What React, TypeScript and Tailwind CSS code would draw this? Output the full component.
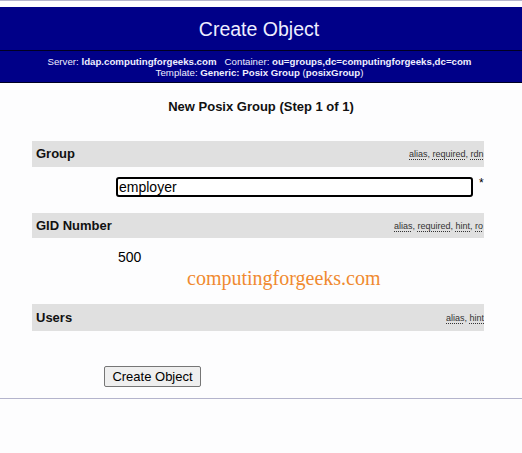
import React from "react";

type Attr = {
    label: string;
    hints: string[];
    hintWidth: string;
};

const sans = { fontFamily: '"Liberation Sans", Arial, sans-serif' };

function AttrBar({ label, hints, hintWidth }: Attr) {
    return (
        <div className="flex h-full items-center justify-between bg-[#e0e0e0] pl-1">
            <span className="text-[13px] leading-[16px] font-bold text-[#111]">{label}</span>
            <span className={`${hintWidth} overflow-hidden whitespace-nowrap text-[9px] leading-[12px] text-[#333]`}>
                {hints.map((h, i) => (
                    <React.Fragment key={h}>
                        <abbr className="no-underline">
                            <span className="underline decoration-dotted underline-offset-2">{h}</span>
                        </abbr>
                        {i < hints.length - 1 ? ", " : ""}
                    </React.Fragment>
                ))}
            </span>
        </div>
    );
}

export default function App() {
    return (
        <div className="relative h-[453px] w-[522px] overflow-hidden bg-[#fdfdfe]" style={sans}>
            {/* top rule */}
            <div className="h-[1px] bg-[#b4b4cc]" />

            {/* page header */}
            <div className="mt-[6px] bg-[#000088] text-center text-[#eeeeff]">
                <div className="flex h-[43px] items-center justify-center pr-[4px] text-[19.5px] leading-[24px]">Create Object</div>
                <div className="h-[1px] bg-[#000022]" />
                <div className="flex h-[31px] flex-col items-center justify-center pr-[3px] text-[9.7px] leading-[11px]">
                    <div>
                        Server: <b>ldap.computingforgeeks.com</b>&nbsp;&nbsp;&nbsp;Container:{" "}
                        <b>ou=groups,dc=computingforgeeks,dc=com</b>
                    </div>
                    <div>
                        Template: <b>Generic: Posix Group</b> (<b>posixGroup</b>)
                    </div>
                </div>
                <div className="h-[1px] bg-[#000022]" />
            </div>

            <div className="mt-[16px] text-center text-[13px] leading-[16px] font-bold text-[#111]">
                New Posix Group (Step 1 of 1)
            </div>

            <div className="ml-[32px] mt-[26px] w-[452px]">
                <div className="h-[26px]">
                    <AttrBar label="Group" hints={["alias", "required", "rdn"]} hintWidth="w-[75px]" />
                </div>
                <div className="mt-[10px] flex h-[20px] items-start">
                    <div className="ml-[84px] flex h-[20px] w-[357px] items-center rounded-[3px] border-2 border-black bg-white px-[1px] text-[14px] leading-[16px] text-black">
                        employer
                    </div>
                    <span className="ml-[6px] text-[12px] leading-[12px] text-black">*</span>
                </div>

                <div className="mt-[16px] h-[25px]">
                    <AttrBar label="GID Number" hints={["alias", "required", "hint", "ro"]} hintWidth="w-[90px]" />
                </div>
                <div className="ml-[86px] mt-[11px] text-[14px] leading-[16px] text-black">500</div>

                <div className="mt-[39px] h-[27px]">
                    <AttrBar label="Users" hints={["alias", "hint"]} hintWidth="w-[38px]" />
                </div>
            </div>

            <div className="ml-[104px] mt-[35px] flex">
                <button className="block h-[21px] w-[97px] rounded-[2px] border border-[#767676] bg-[#efefef] text-[13px] leading-[16px] text-black">
                    Create Object
                </button>
            </div>

            <div className="mt-[11px] h-[1px] bg-[#b4b4cc]" />

            {/* watermark */}
            <div
                className="absolute left-[187px] top-[266px] text-[20px] leading-[24px] text-[#f08a30]"
                style={{ fontFamily: '"Liberation Serif", "Times New Roman", serif' }}
            >
                computingforgeeks.com
            </div>
        </div>
    );
}
